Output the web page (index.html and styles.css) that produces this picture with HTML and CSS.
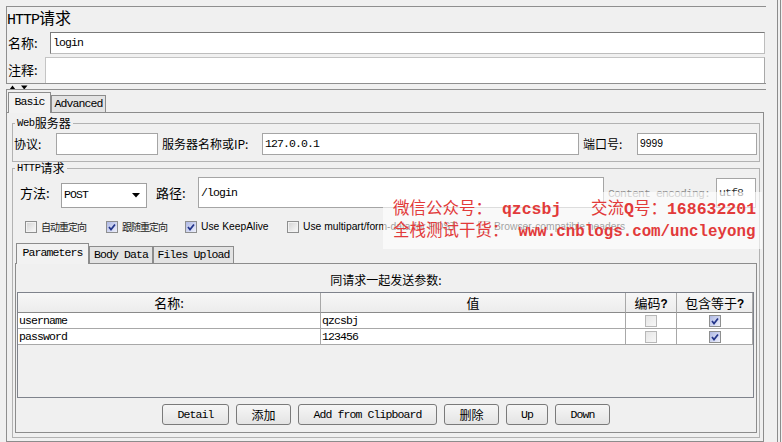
FILE: index.html
```html
<!DOCTYPE html>
<html lang="zh-CN">
<head>
<meta charset="utf-8">
<title>HTTP请求</title>
<link rel="stylesheet" href="styles.css">
</head>
<body>
<div class="app">
  <div class="main">
    <section class="top">
      <div class="title"><span class="title-l">HTTP</span>请求</div>
      <div class="row name-row">
        <span class="lbl lbl-name">名称:</span>
        <div class="field name-field mono">login</div>
      </div>
      <div class="row cmt-row">
        <span class="lbl lbl-cmt">注释:</span>
        <div class="field cmt-field"></div>
      </div>
    </section>
    <div class="divider">
      <svg width="22" height="5" viewBox="0 0 22 5"><path d="M3.5 0.5L6.5 4.5H0.5Z M12 0.5H18.5L15.25 4.5Z" fill="#000"/></svg>
    </div>
    <section class="lower">
      <div class="tabs">
        <div class="tab sel mono w-basic">Basic</div>
        <div class="tab mono w-adv">Advanced</div>
      </div>
      <div class="tabpanel">
        <fieldset class="group web">
          <legend><span class="mono">Web</span>服务器</legend>
          <div class="row web-row">
            <span class="lbl w-proto">协议:</span>
            <div class="field in-proto"></div>
            <span class="lbl w-host">服务器名称或IP:</span>
            <div class="field in-host mono">127.0.0.1</div>
            <span class="lbl w-port">端口号:</span>
            <div class="field in-port sans">9999</div>
          </div>
        </fieldset>
        <fieldset class="group http">
          <legend><span class="mono">HTTP</span>请求</legend>
          <div class="row path-row">
            <span class="lbl w-method">方法:</span>
            <div class="select mono"><span>POST</span><svg width="8" height="5" viewBox="0 0 8 5"><path d="M0 0H8L4 4.5Z" fill="#000"/></svg></div>
            <span class="lbl w-path">路径:</span>
            <div class="field in-path mono">/login</div>
            <span class="lbl w-enc mono">Content encoding:</span>
            <div class="field in-enc mono">utf8</div>
          </div>
          <div class="row check-row">
            <label class="chk c1"><span class="cb"></span><span class="cjk-s">自动重定向</span></label>
            <label class="chk c2"><span class="cb on"><svg width="10" height="10" viewBox="0 0 10 10"><path d="M2 5l2 2.6 4-5.2" fill="none" stroke="#23358a" stroke-width="1.7"/></svg></span><span class="cjk-s">跟随重定向</span></label>
            <label class="chk c3"><span class="cb on"><svg width="10" height="10" viewBox="0 0 10 10"><path d="M2 5l2 2.6 4-5.2" fill="none" stroke="#23358a" stroke-width="1.7"/></svg></span><span class="sans">Use KeepAlive</span></label>
            <label class="chk c4"><span class="cb"></span><span class="sans">Use multipart/form-data for POST</span></label>
            <label class="chk c5"><span class="cb"></span><span class="sans">Browser-compatible headers</span></label>
          </div>
          <div class="subtabs">
            <div class="tab sel mono w-par">Parameters</div>
            <div class="tab mono w-body">Body Data</div>
            <div class="tab mono w-files">Files Upload</div>
          </div>
          <div class="subpanel">
            <div class="caption">同请求一起发送参数:</div>
            <div class="scroll">
              <div class="grid">
                <div class="th">名称:</div>
                <div class="th">值</div>
                <div class="th">编码<span class="q">?</span></div>
                <div class="th">包含等于<span class="q">?</span></div>

                <div class="td mono">username</div>
                <div class="td mono">qzcsbj</div>
                <div class="td tc"><span class="cb dis"></span></div>
                <div class="td tc"><span class="cb on"><svg width="10" height="10" viewBox="0 0 10 10"><path d="M2 5l2 2.6 4-5.2" fill="none" stroke="#23358a" stroke-width="1.7"/></svg></span></div>

                <div class="td mono">password</div>
                <div class="td mono">123456</div>
                <div class="td tc"><span class="cb dis"></span></div>
                <div class="td tc"><span class="cb on"><svg width="10" height="10" viewBox="0 0 10 10"><path d="M2 5l2 2.6 4-5.2" fill="none" stroke="#23358a" stroke-width="1.7"/></svg></span></div>
              </div>
            </div>
            <div class="buttons">
              <button class="btn mono b-detail">Detail</button>
              <button class="btn b-add">添加</button>
              <button class="btn mono b-clip">Add from Clipboard</button>
              <button class="btn b-del">删除</button>
              <button class="btn mono b-up">Up</button>
              <button class="btn mono b-down">Down</button>
            </div>
          </div>
        </fieldset>
      </div>
    </section>
  </div>
  <div class="rbar"></div>
  <div class="watermark">
    <div class="wm-line">微信公众号：<span class="wm-l"> qzcsbj   </span>交流<span class="wm-l">Q</span>号：<span class="wm-l">168632201</span></div>
    <div class="wm-line">全栈测试干货：<span class="wm-l"> </span><span class="wm-url">www.cnblogs.com/uncleyong</span></div>
  </div>
</div>
</body>
</html>
```
FILE: styles.css
```css
* { box-sizing: border-box; }
html, body { margin: 0; padding: 0; }
body {
  width: 782px;
  height: 442px;
  overflow: hidden;
  background: #f0f0f0;
  color: #000;
  font-family: "Noto Sans CJK SC", sans-serif;
  font-size: 12px;
  line-height: 14px;
}
.app { position: relative; display: flex; height: 442px; }
.main { width: 760px; margin-left: 6px; display: flex; flex-direction: column; }
.rbar { margin-left: 11px; width: 4px; border-left: 1px solid #8c8c8c; border-right: 1px solid #8c8c8c; }

.mono {
  font-family: "Liberation Mono", "Noto Sans CJK SC", monospace;
  font-size: 11.5px;
  letter-spacing: -0.9px;
}
.sans { font-family: "Liberation Sans", sans-serif; font-size: 10.3px; }
.cjk-s { font-size: 10px; letter-spacing: -1px; color: #222; }

.row { display: flex; align-items: center; }
.lbl { flex: none; white-space: nowrap; }
.field { flex: none; background: #fff; border: 1px solid #a5a5a5; white-space: nowrap; overflow: hidden; }

/* top panel */
.top { margin-top: 6px; border-top: 1px solid #8f8f8f; border-left: 1px solid #8f8f8f; border-bottom: 1px solid #8f8f8f; }
.title { height: 25px; font-size: 16px; line-height: 20px; }
.title-l { font-family: "Liberation Mono", monospace; font-size: 15px; letter-spacing: -1px; }
.name-row { height: 22px; padding-left: 1px; }
.lbl-name { width: 42px; font-size: 13px; }
.name-field { width: 715px; height: 22px; padding-left: 2px; line-height: 20px; border-color: #7a7a7a #bdbdbd #bdbdbd #7a7a7a; }
.cmt-row { height: 26px; margin-top: 3px; padding-left: 1px; }
.lbl-cmt { width: 37px; font-size: 13px; }
.cmt-field { width: 720px; height: 26px; border-color: #c4c4c4 #a8a8a8 transparent #c4c4c4; border-bottom: none; }

.divider { height: 5px; padding: 0 0 0 3px; }
.divider svg { display: block; margin-top: 1px; }

/* lower split: tabs */
.lower { flex: 1; display: flex; flex-direction: column; border-top: 1px solid #8f8f8f; border-left: 1px solid #8f8f8f; }
.tabs { height: 22px; display: flex; align-items: flex-end; padding-left: 1px; }
.tab {
  flex: none;
  height: 17px;
  border: 1px solid #8c8c8c;
  border-bottom: none;
  background: #e3e3e3;
  text-align: center;
  line-height: 16px;
  white-space: nowrap;
}
.tab.sel { height: 21px; margin-bottom: -1px; background: #f2f2f2; position: relative; z-index: 1; line-height: 17px; }
.w-basic { width: 43px; }
.w-adv { width: 55px; }
.tabpanel { flex: 1; margin-right: 2px; border-top: 1px solid #8c8c8c; border-right: 1px solid #8c8c8c; border-bottom: 1px solid #8c8c8c; padding-top: 4px; }

/* titled groups */
.group { margin: 0 3px 0 5px; border: 1px solid #b2b2b2; padding: 4px 0 6px 0; min-width: 0; }
.group legend {
  height: 12px;
  padding: 0 2px;
  margin-left: 2px;
  font-size: 12px;
  line-height: 12px;
  display: flex;
  align-items: center;
  white-space: nowrap;
}
.group legend .mono { font-size: 10.5px; letter-spacing: -0.4px; line-height: 12px; }
.http { padding: 3px 0 4px 0; margin-bottom: 3px; }

.web-row { height: 22px; padding-left: 1px; }
.w-proto { width: 42px; }
.in-proto { width: 102px; height: 22px; }
.w-host { width: 100px; margin-left: 4px; }
.in-host { width: 317px; height: 22px; padding-left: 2px; line-height: 20px; }
.w-port { width: 54px; margin-left: 4px; }
.in-port { width: 120px; height: 22px; padding-left: 2px; line-height: 20px; }

.path-row { height: 31px; padding-left: 7px; }
.w-method { width: 41px; font-size: 13px; }
.select {
  flex: none;
  width: 86px;
  height: 25px;
  margin-top: 5px;
  background: #fff;
  border: 1px solid #a0a0a0;
  display: flex;
  align-items: center;
  justify-content: space-between;
  padding: 0 6px 0 2px;
}
.select svg { display: block; }
.w-path { width: 42px; margin-left: 9px; font-size: 13px; }
.in-path { width: 406px; height: 31px; padding-left: 2px; line-height: 29px; }
.w-enc { width: 108px; margin-left: 4px; color: #8a8a8a; margin-top: 2px; }
.in-enc { width: 40px; height: 30px; padding-left: 2px; line-height: 28px; color: #333; }

.check-row { height: 15px; margin-top: 11px; padding-left: 12px; }
.chk { flex: none; display: flex; align-items: center; gap: 4px; white-space: nowrap; height: 15px; }
.c1 { width: 81px; }
.c2 { width: 79px; }
.c3 { width: 102px; }
.c4 { width: 191px; }

.cb {
  flex: none;
  display: inline-block;
  width: 12px;
  height: 12px;
  border: 1px solid #8e8f8f;
  background: linear-gradient(135deg, #d2d2d2, #fbfbfb);
  box-shadow: inset 0 0 0 1px #f2f2f2;
}
.cb svg { display: block; }
.cb.on { background: linear-gradient(135deg, #aeb8e4, #eef0fb); box-shadow: none; }
.cb.dis { border-color: #b8b8b8; background: linear-gradient(135deg, #e6e6e6, #f7f7f7); box-shadow: none; }

/* sub tabs */
.subtabs { height: 29px; display: flex; align-items: flex-end; padding-left: 3px; }
.w-par { width: 73px; }
.w-body { width: 64px; }
.w-files { width: 81px; }
.subpanel { height: 170px; margin: 0 2px; border: 1px solid #8c8c8c; display: flex; flex-direction: column; }
.caption { height: 28px; padding-top: 9px; line-height: 14px; text-align: center; flex: none; }
.scroll { height: 106px; flex: none; margin: 0 2px 0 1px; border: 1px solid #7f838c; background: #f0f0f0; }
.grid { display: grid; grid-template-columns: 303px 305px 51px 76px; }
.th {
  height: 20px;
  border-right: 1px solid #a8a8a8;
  border-bottom: 1px solid #8a8a8a;
  background: linear-gradient(#f7f7f7, #ececec);
  font-size: 13px;
  line-height: 19px;
  text-align: center;
  overflow: hidden;
}
.th .q { font-family: "Liberation Mono", monospace; font-weight: bold; font-size: 12px; }
.td {
  height: 16px;
  border-right: 1px solid #a8a8a8;
  border-bottom: 1px solid #a8a8a8;
  background: #fff;
  line-height: 15px;
  padding-left: 1px;
  overflow: hidden;
}
.td.tc { display: flex; align-items: center; justify-content: center; padding-left: 0; }

.buttons { height: 21px; flex: none; margin-top: 6px; display: flex; justify-content: center; gap: 7px; }
.btn {
  height: 21px;
  padding: 0;
  border: 1px solid #7a7a7a;
  border-radius: 3px;
  background: linear-gradient(#f6f6f6, #e4e4e4);
  color: #000;
  line-height: 19px;
  text-align: center;
}
.btn.mono { font-family: "Liberation Mono", "Noto Sans CJK SC", monospace; font-size: 11.5px; letter-spacing: -0.9px; }
.b-add, .b-del { font-family: "Noto Sans CJK SC", sans-serif; font-size: 12px; }
.b-detail { width: 67px; }
.b-add { width: 55px; }
.b-clip { width: 139px; }
.b-del { width: 55px; }
.b-up { width: 42px; }
.b-down { width: 55px; }

/* watermark overlay */
.watermark {
  position: absolute;
  left: 383px;
  top: 192px;
  width: 379px;
  height: 57px;
  background: rgba(255, 255, 255, 0.62);
  padding: 4px 0 0 10px;
  color: #e23a3a;
  font-size: 16.5px;
  line-height: 22px;
}
.wm-line { height: 22px; white-space: pre; }
.wm-l { font-family: "Liberation Mono", monospace; font-weight: bold; font-size: 16.5px; }
.wm-url { font-family: "Liberation Mono", monospace; font-weight: bold; font-size: 15.8px; }
```
